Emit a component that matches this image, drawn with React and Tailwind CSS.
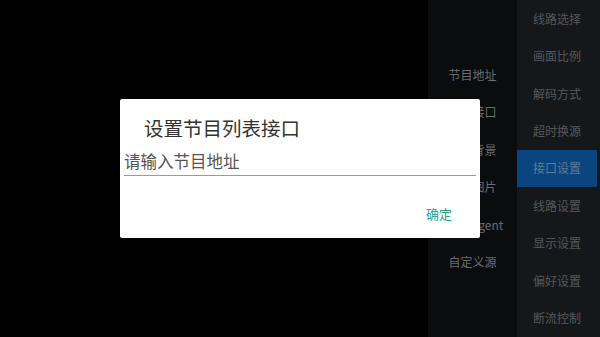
export default function App() {
  const mid = ["节目地址", "直播接口", "设置背景", "开机图片", "User-Agent", "自定义源"];
  const right = ["线路选择", "画面比例", "解码方式", "超时换源", "接口设置", "线路设置", "显示设置", "偏好设置", "断流控制"];
  const font = { fontFamily: '"Noto Sans CJK SC", "Noto Sans", sans-serif' };
  return (
    <div className="relative w-[600px] h-[337px] overflow-hidden flex bg-black" style={font}>
      <div className="flex-1 bg-black" />
      <div className="w-[89px] bg-[#0b0c0e] pt-[56px] flex flex-col">
        {mid.map((t) => (
          <div key={t} className="h-[37.5px] flex items-center justify-center text-[12px] text-[#6c6d70] whitespace-nowrap">
            {t}
          </div>
        ))}
      </div>
      <div className="w-[83px] bg-[#15171a] pr-[3px] flex flex-col">
        {right.map((t, i) => (
          <div
            key={t}
            className={
              i === 4
                ? "h-[37.5px] flex items-center justify-center text-[12px] text-[#5f7b98] bg-[#0a4580]"
                : "h-[37.5px] flex items-center justify-center text-[12px] text-[#55585d]"
            }
          >
            {t}
          </div>
        ))}
      </div>
      <div className="absolute left-[120px] top-[99px] w-[360px] h-[139px] bg-white rounded-[2px] flex flex-col">
        <div className="pl-[24px] pt-[16px] h-[49px] text-[19.5px] leading-[26px] text-[#333333]">设置节目列表接口</div>
        <div className="mx-[4px] h-[28px] border-b-[1.5px] border-[#9a9a9a] text-[16.5px] leading-[26px] text-[#555555]">
          请输入节目地址
        </div>
        <div className="flex justify-end pr-[28px] pt-[29px]">
          <span className="text-[13px] leading-[18px] text-[#2a9d8f]">确定</span>
        </div>
      </div>
    </div>
  );
}
